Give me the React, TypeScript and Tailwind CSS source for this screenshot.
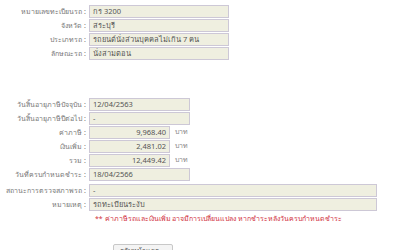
import React from "react";

const font = { fontFamily: "Tahoma, 'Noto Sans', 'DejaVu Sans', sans-serif" };

function Row({ label, children }: { label: string; children: React.ReactNode }) {
  return (
    <div className="flex items-center h-[13px]">
      <div className="w-[89px] shrink-0 text-right pr-[3px] text-[7px] text-[#777] leading-[13px] whitespace-nowrap">{label} :</div>
      {children}
    </div>
  );
}

function Field({ w, value, right }: { w: string; value: string; right?: boolean }) {
  return (
    <div className={`${w} h-[13px] border border-[#cdc8d6] bg-[#efefe0] text-[7.5px] text-[#555] leading-[11px] px-[3px] whitespace-nowrap overflow-hidden ${right ? "text-right" : ""}`}>
      {value}
    </div>
  );
}

function Money({ value }: { value: string }) {
  return (
    <div className="flex items-center">
      <Field w="w-[81px]" value={value} right />
      <span className="ml-[5px] text-[7px] text-[#888]">บาท</span>
    </div>
  );
}

export default function App() {
  return (
    <div className="w-[400px] h-[250px] bg-white overflow-hidden relative" style={font}>
      <div className="pt-[5px] flex flex-col gap-[1px]">
        <Row label="หมายเลขทะเบียนรถ"><Field w="w-[140px]" value="กร 3200" /></Row>
        <Row label="จังหวัด"><Field w="w-[140px]" value="สระบุรี" /></Row>
        <Row label="ประเภทรถ"><Field w="w-[140px]" value="รถยนต์นั่งส่วนบุคคลไม่เกิน 7 คน" /></Row>
        <Row label="ลักษณะรถ"><Field w="w-[140px]" value="นั่งสามตอน" /></Row>
      </div>
      <div className="mt-[38px] flex flex-col gap-[1px]">
        <Row label="วันสิ้นอายุภาษีปัจจุบัน"><Field w="w-[101px]" value="12/04/2563" /></Row>
        <Row label="วันสิ้นอายุภาษีปีต่อไป"><Field w="w-[101px]" value="-" /></Row>
        <Row label="ค่าภาษี"><Money value="9,968.40" /></Row>
        <Row label="เงินเพิ่ม"><Money value="2,481.02" /></Row>
        <Row label="รวม"><Money value="12,449.42" /></Row>
        <Row label="วันที่ครบกำหนดชำระ"><Field w="w-[101px]" value="18/04/2566" /></Row>
        <div className="h-[1px]" />
        <Row label="สถานะการตรวจสภาพรถ"><Field w="w-[288px]" value="-" /></Row>
        <Row label="หมายเหตุ"><Field w="w-[288px]" value="รถทะเบียนระงับ" /></Row>
      </div>
      <div className="ml-[95px] mt-[2px] text-[7px] text-[#d0303c] leading-[12px]">
        ** ค่าภาษีรถและเงินเพิ่ม อาจมีการเปลี่ยนแปลง หากชำระหลังวันครบกำหนดชำระ
      </div>
      <div className="mt-[19px] ml-[113px] w-[60px] h-[14px] border border-[#c8c8c8] bg-[#f4f4f4] rounded-[2px] text-[7px] text-[#555] leading-[12px] px-[6px]">
        กลับหน้าแรก
      </div>
    </div>
  );
}
